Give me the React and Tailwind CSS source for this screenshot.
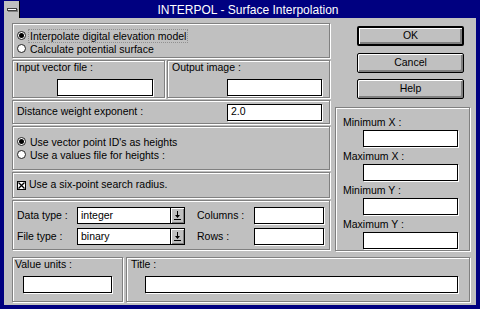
import React from 'react'

const font = { fontFamily: '"Liberation Sans", Arial, sans-serif' }

function Group({ className = '', children }) {
  return (
    <div className={`border border-[#808080] shadow-[inset_1px_1px_0_#fff,1px_1px_0_#fff] ${className}`}>
      {children}
    </div>
  )
}

function Field({ className = '', children }) {
  return (
    <div className={`h-[17px] bg-white border border-black shadow-[1px_1px_0_#fff] flex items-center pl-[3px] ${className}`}>
      {children}
    </div>
  )
}

function Radio({ checked, children, focus }) {
  return (
    <div className="flex items-center h-[13px]">
      <span className="w-[9px] h-[9px] rounded-full border border-[#202020] bg-white flex items-center justify-center">
        {checked && <span className="w-[5px] h-[5px] rounded-full bg-black" />}
      </span>
      <span className={`ml-[2px] px-[1px] leading-[12px] ${focus ? 'border border-dotted border-[#909090]' : 'border border-transparent'}`}>
        {children}
      </span>
    </div>
  )
}

function Btn({ children, isDefault }) {
  return (
    <div
      className={`w-[107px] h-[20px] rounded-[2px] border-black bg-[#c0c0c0] flex items-center justify-center shadow-[inset_1px_1px_0_#fff,inset_-1px_-1px_0_#808080,inset_-2px_-2px_0_#808080] ${isDefault ? 'border-2' : 'border'}`}
    >
      {children}
    </div>
  )
}

function Combo({ value }) {
  return (
    <div className="w-[108px] h-[17px] flex border border-black bg-white">
      <div className="flex-1 flex items-center pl-[3px]">{value}</div>
      <div className="w-[14px] border-l border-black bg-[#c0c0c0] shadow-[inset_1px_1px_0_#fff,inset_-1px_-1px_0_#808080] flex items-center justify-center">
        <svg width="7" height="9" viewBox="0 0 7 9">
          <path d="M3 0h1v4h2L3.5 7 1 4h2z" fill="#000" />
          <rect x="0" y="8" width="7" height="1" fill="#000" />
        </svg>
      </div>
    </div>
  )
}

export default function App() {
  return (
    <div className="w-[480px] h-[309px] bg-[#000080] flex flex-col px-[4px] pt-[1px] text-[10.5px] text-black" style={font}>
      {/* title bar */}
      <div className="h-[17px] flex">
        <div className="w-[16px] h-[17px] bg-[#c0c0c0] flex items-center justify-center border-r border-black">
          <span className="w-[10px] h-[3px] bg-white border border-[#404040] shadow-[1px_1px_0_#808080]" />
        </div>
        <div className="flex-1 flex items-center justify-center text-white text-[12px]">
          INTERPOL - Surface Interpolation
        </div>
      </div>

      {/* body */}
      <div className="h-[287px] bg-[#c0c0c0] flex flex-col pt-[5px] pl-[8px] pr-[6px]">
        <div className="flex gap-[5px]">
          {/* left column */}
          <div className="w-[318px] flex flex-col">
            <Group className="h-[35px] pl-[4px] pt-[5px]">
              <Radio checked focus>Interpolate digital elevation model</Radio>
              <Radio>Calculate potential surface</Radio>
            </Group>

            <div className="flex gap-[2px] mt-[2px]">
              <Group className="w-[153px] h-[38px] pl-[3px]">
                <div className="leading-[13px]">Input vector file :</div>
                <Field className="w-[96px] mt-[5px] ml-[41px]" />
              </Group>
              <Group className="w-[163px] h-[38px] pl-[4px]">
                <div className="leading-[13px]">Output image :</div>
                <Field className="w-[95px] mt-[5px] ml-[55px]" />
              </Group>
            </div>

            <Group className="h-[24px] mt-[2px] pl-[4px] pr-[7px] flex items-center justify-between">
              <span>Distance weight exponent :</span>
              <Field className="w-[95px]">2.0</Field>
            </Group>

            <Group className="h-[44px] mt-[2px] pl-[4px] pt-[8px]">
              <Radio checked>Use vector point ID's as heights</Radio>
              <Radio>Use a values file for heights :</Radio>
            </Group>

            <Group className="h-[26px] mt-[2px] pl-[4px] flex items-center">
              <span className="w-[9px] h-[9px] border border-black bg-white flex items-center justify-center">
                <svg width="7" height="7" viewBox="0 0 7 7">
                  <path d="M0.5 0.5L6.5 6.5M6.5 0.5L0.5 6.5" stroke="#000" strokeWidth="1.3" />
                </svg>
              </span>
              <span className="ml-[3px]">Use a six-point search radius.</span>
            </Group>

            <Group className="h-[50px] mt-[2px] pl-[4px] pt-[6px] flex flex-col gap-[4px]">
              <div className="flex items-center">
                <span className="w-[60px]">Data type :</span>
                <Combo value="integer" />
                <span className="w-[57px] ml-[12px]">Columns :</span>
                <Field className="w-[70px]" />
              </div>
              <div className="flex items-center">
                <span className="w-[60px]">File type :</span>
                <Combo value="binary" />
                <span className="w-[57px] ml-[12px]">Rows :</span>
                <Field className="w-[70px]" />
              </div>
            </Group>
          </div>

          {/* right column */}
          <div className="w-[135px] flex flex-col">
            <div className="ml-[22px] mt-[3px] flex flex-col">
              <Btn isDefault>OK</Btn>
              <div className="mt-[7px]"><Btn>Cancel</Btn></div>
              <div className="mt-[6px]"><Btn>Help</Btn></div>
            </div>
            <Group className="h-[144px] mt-[8px] pl-[7px] pt-[7px] flex flex-col gap-[2px]">
              {['Minimum X :', 'Maximum X :', 'Minimum Y :', 'Maximum Y :'].map((l) => (
                <div key={l}>
                  <div className="leading-[14px]">{l}</div>
                  <Field className="w-[95px] ml-[20px] mt-[1px]" />
                </div>
              ))}
            </Group>
          </div>
        </div>

        {/* bottom row */}
        <div className="flex gap-[3px] mt-[6px]">
          <Group className="w-[111px] h-[45px] pl-[2px]">
            <div className="leading-[13px]">Value units :</div>
            <Field className="w-[89px] mt-[5px] ml-[8px]" />
          </Group>
          <Group className="w-[344px] h-[45px] pl-[4px]">
            <div className="leading-[13px]">Title :</div>
            <Field className="w-[313px] mt-[5px] ml-[14px]" />
          </Group>
        </div>
      </div>
    </div>
  )
}
